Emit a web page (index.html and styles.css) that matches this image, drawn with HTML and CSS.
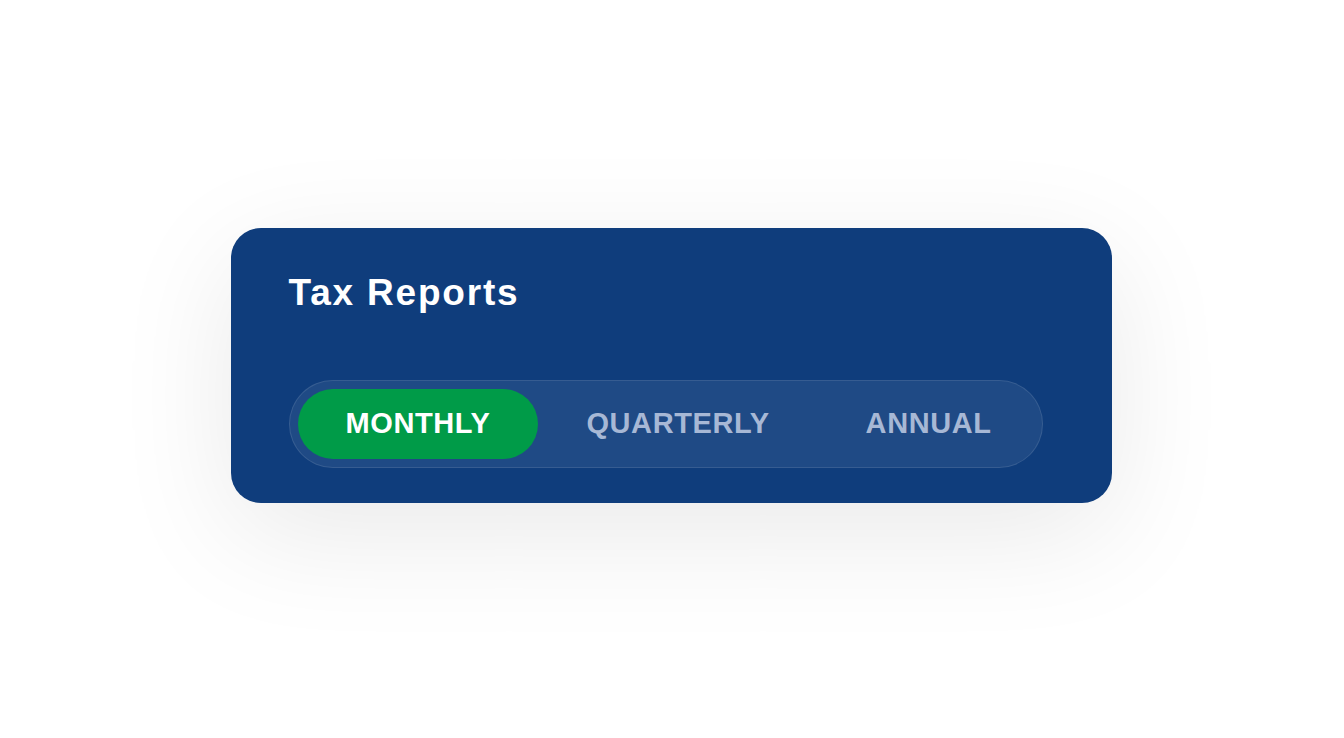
FILE: index.html
```html
<!DOCTYPE html>
<html lang="en">
<head>
<meta charset="utf-8">
<title>Tax Reports</title>
<link rel="stylesheet" href="styles.css">
</head>
<body>
<main class="stage">
  <section class="card">
    <h1 class="title">Tax Reports</h1>
    <div class="segmented" role="tablist">
      <button class="seg active" role="tab">MONTHLY</button>
      <button class="seg" role="tab">QUARTERLY</button>
      <button class="seg" role="tab">ANNUAL</button>
    </div>
  </section>
</main>
</body>
</html>
```

FILE: styles.css
```css
* { box-sizing: border-box; }
html, body { margin: 0; height: 100%; }
body {
  background: #ffffff;
  font-family: "Liberation Sans", Arial, sans-serif;
}
.stage {
  height: 100%;
  display: flex;
  align-items: center;
  justify-content: center;
  padding-bottom: 8px;
}
.card {
  width: 881px;
  margin-left: -2px;
  background: #0f3d7c;
  border-radius: 30px;
  padding: 40px 56px 35px 58px;
  box-shadow: 0 30px 120px rgba(0, 0, 0, 0.09);
}
.title {
  margin: 0 0 62px;
  color: #ffffff;
  font-size: 37px;
  font-weight: 700;
  line-height: 50px;
  letter-spacing: 1.8px;
}
.segmented {
  display: inline-flex;
  width: 754px;
  padding: 8px;
  border: 1.5px solid rgba(255, 255, 255, 0.1);
  border-radius: 44px;
  background: rgba(255, 255, 255, 0.07);
}
.seg {
  height: 70px;
  padding: 0 48px;
  border: 0;
  border-radius: 35px;
  background: transparent;
  color: #a7b8d5;
  font-family: inherit;
  font-size: 29px;
  font-weight: 700;
  letter-spacing: 0.6px;
  white-space: nowrap;
}
.seg.active {
  background: #009b48;
  color: #ffffff;
}
```
